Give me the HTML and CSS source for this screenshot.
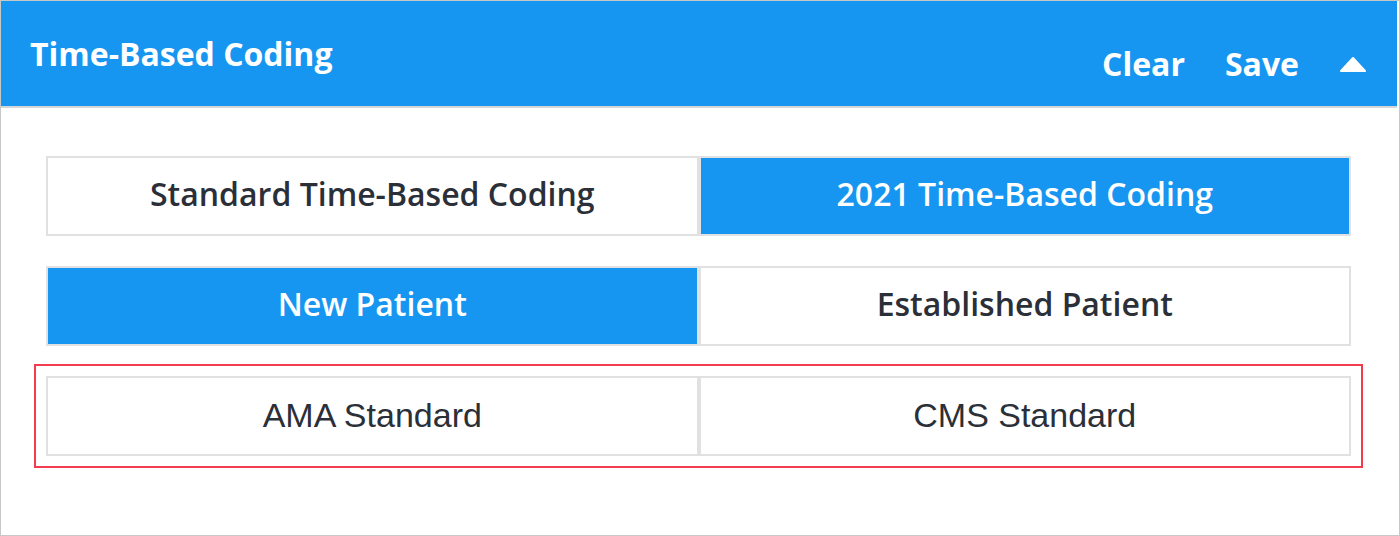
FILE: index.html
```html
<!DOCTYPE html>
<html>
<head>
<meta charset="utf-8">
<link rel="stylesheet" href="styles.css">
</head>
<body>
<div class="panel">
  <div class="header">
    <div class="title">Time-Based Coding</div>
    <div class="actions">
      <span class="action">Clear</span>
      <span class="action">Save</span>
      <svg class="caret" width="28" height="16" viewBox="0 0 28 16"><path d="M2 15 L14 2 L26 15 Z" fill="#fff" stroke="#fff" stroke-width="2" stroke-linejoin="round"/></svg>
    </div>
  </div>
  <div class="content">
    <div class="row">
      <div class="btn">Standard Time-Based Coding</div>
      <div class="btn active">2021 Time-Based Coding</div>
    </div>
    <div class="row">
      <div class="btn active">New Patient</div>
      <div class="btn">Established Patient</div>
    </div>
    <div class="row highlighted">
      <div class="btn plain">AMA Standard</div>
      <div class="btn plain">CMS Standard</div>
    </div>
  </div>
</div>
</body>
</html>
```

FILE: styles.css
```css
html, body {
  margin: 0;
  padding: 0;
  background: #fff;
}
.panel {
  width: 1400px;
  height: 536px;
  box-sizing: border-box;
  border: 1px solid #c8c8c8;
  background: #fff;
  overflow: hidden;
}
.header {
  height: 105px;
  margin-right: 2px;
  background: #1796f1;
  border-bottom: 2px solid #d6d6d6;
  display: flex;
  justify-content: space-between;
  align-items: flex-start;
  padding: 0 30px 0 29px;
  color: #fff;
  font-family: "Open Sans", sans-serif;
  font-weight: 700;
}
.title {
  font-size: 32px;
  line-height: 40px;
  padding-top: 33px;
}
.actions {
  display: flex;
  align-items: center;
  gap: 40px;
  padding-top: 43px;
  font-size: 32px;
  line-height: 40px;
}
.caret {
  display: block;
}
.content {
  padding: 48px 48px 0 45px;
  display: flex;
  flex-direction: column;
  gap: 30px;
}
.row {
  display: flex;
}
.row.highlighted {
  outline: 2px solid #f43b4e;
  outline-offset: 10px;
}
.btn {
  flex: 1;
  height: 80px;
  box-sizing: border-box;
  border: 2px solid #e1e1e1;
  padding-bottom: 5px;
  display: flex;
  align-items: center;
  justify-content: center;
  font-family: "Open Sans", sans-serif;
  font-weight: 600;
  font-size: 32px;
  color: #2b2f38;
  background: #fff;
}
.btn.active {
  background: #1796f1;
  color: #fff;
}
.btn.plain {
  font-family: "Liberation Sans", Arial, sans-serif;
  font-weight: 400;
  font-size: 34px;
  padding-bottom: 2px;
  color: #2b2f38;
}
```
